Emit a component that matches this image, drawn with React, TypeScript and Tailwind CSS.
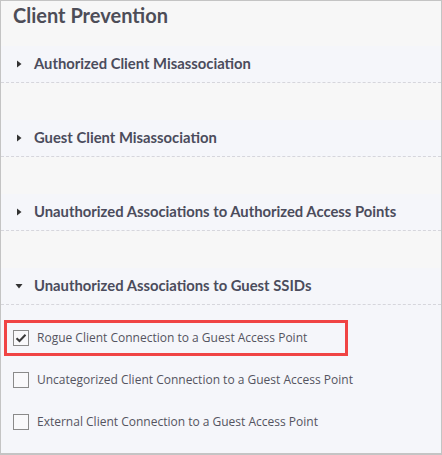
import React from 'react';

const sections = [
  { title: 'Authorized Client Misassociation', open: false },
  { title: 'Guest Client Misassociation', open: false },
  { title: 'Unauthorized Associations to Authorized Access Points', open: false },
  { title: 'Unauthorized Associations to Guest SSIDs', open: true },
];

const options = [
  { label: 'Rogue Client Connection to a Guest Access Point', checked: true, highlight: true },
  { label: 'Uncategorized Client Connection to a Guest Access Point', checked: false, highlight: false },
  { label: 'External Client Connection to a Guest Access Point', checked: false, highlight: false },
];

function Caret({ open }: { open: boolean }) {
  return (
    <svg width="8" height="8" viewBox="0 0 8 8" className="shrink-0">
      {open ? <path d="M0.5 2 L7.5 2 L4 6.5 Z" fill="#333" /> : <path d="M2 0.5 L6.5 4 L2 7.5 Z" fill="#333" />}
    </svg>
  );
}

function Checkbox({ checked }: { checked: boolean }) {
  return (
    <span className="w-4 h-4 border border-[#8a8a8a] bg-[#f9f9fb] flex items-center justify-center shrink-0">
      {checked && (
        <svg width="12" height="10" viewBox="0 0 12 10">
          <path d="M1.5 5.2 L4.5 8 L10.5 1.8" stroke="#3a3a3a" strokeWidth="2" fill="none" />
        </svg>
      )}
    </span>
  );
}

export default function App() {
  return (
    <div className="w-[442px] h-[455px] bg-[#f7f7f7] border border-[#c4c4c4] border-b-2 overflow-hidden" style={{ fontFamily: 'Lato, "Open Sans", sans-serif' }}>
      <div className="h-[45px] pl-[12px] pt-[2px] text-[20px] font-bold text-[#4d4d57] leading-[24px]">Client Prevention</div>
      {sections.map((s, i) => (
        <div key={i}>
          <div className="h-[37px] bg-[#f5f6fa] border-b border-dashed border-[#d6d6dc] flex items-center gap-[11px] pl-[14px] pb-[1px]">
            <Caret open={s.open} />
            <span className="text-[14.8px] font-bold text-[#4b4c5c]">{s.title}</span>
          </div>
          {!s.open && <div className="h-[37px]" />}
          {s.open && (
            <div className="bg-[#f5f6fa] pt-[15px] pb-[8px] pl-[3px]">
              {options.map((o, j) => (
                <div
                  key={j}
                  className={`h-[36px] w-[344px] flex items-center gap-[8px] pl-[6px] mb-[6px] border-[3px] whitespace-nowrap ${o.highlight ? 'border-[#f04444]' : 'border-transparent'}`}
                >
                  <Checkbox checked={o.checked} />
                  <span className="text-[12px] text-[#545460]" style={{ fontFamily: '"Open Sans", sans-serif' }}>{o.label}</span>
                </div>
              ))}
            </div>
          )}
        </div>
      ))}
    </div>
  );
}
